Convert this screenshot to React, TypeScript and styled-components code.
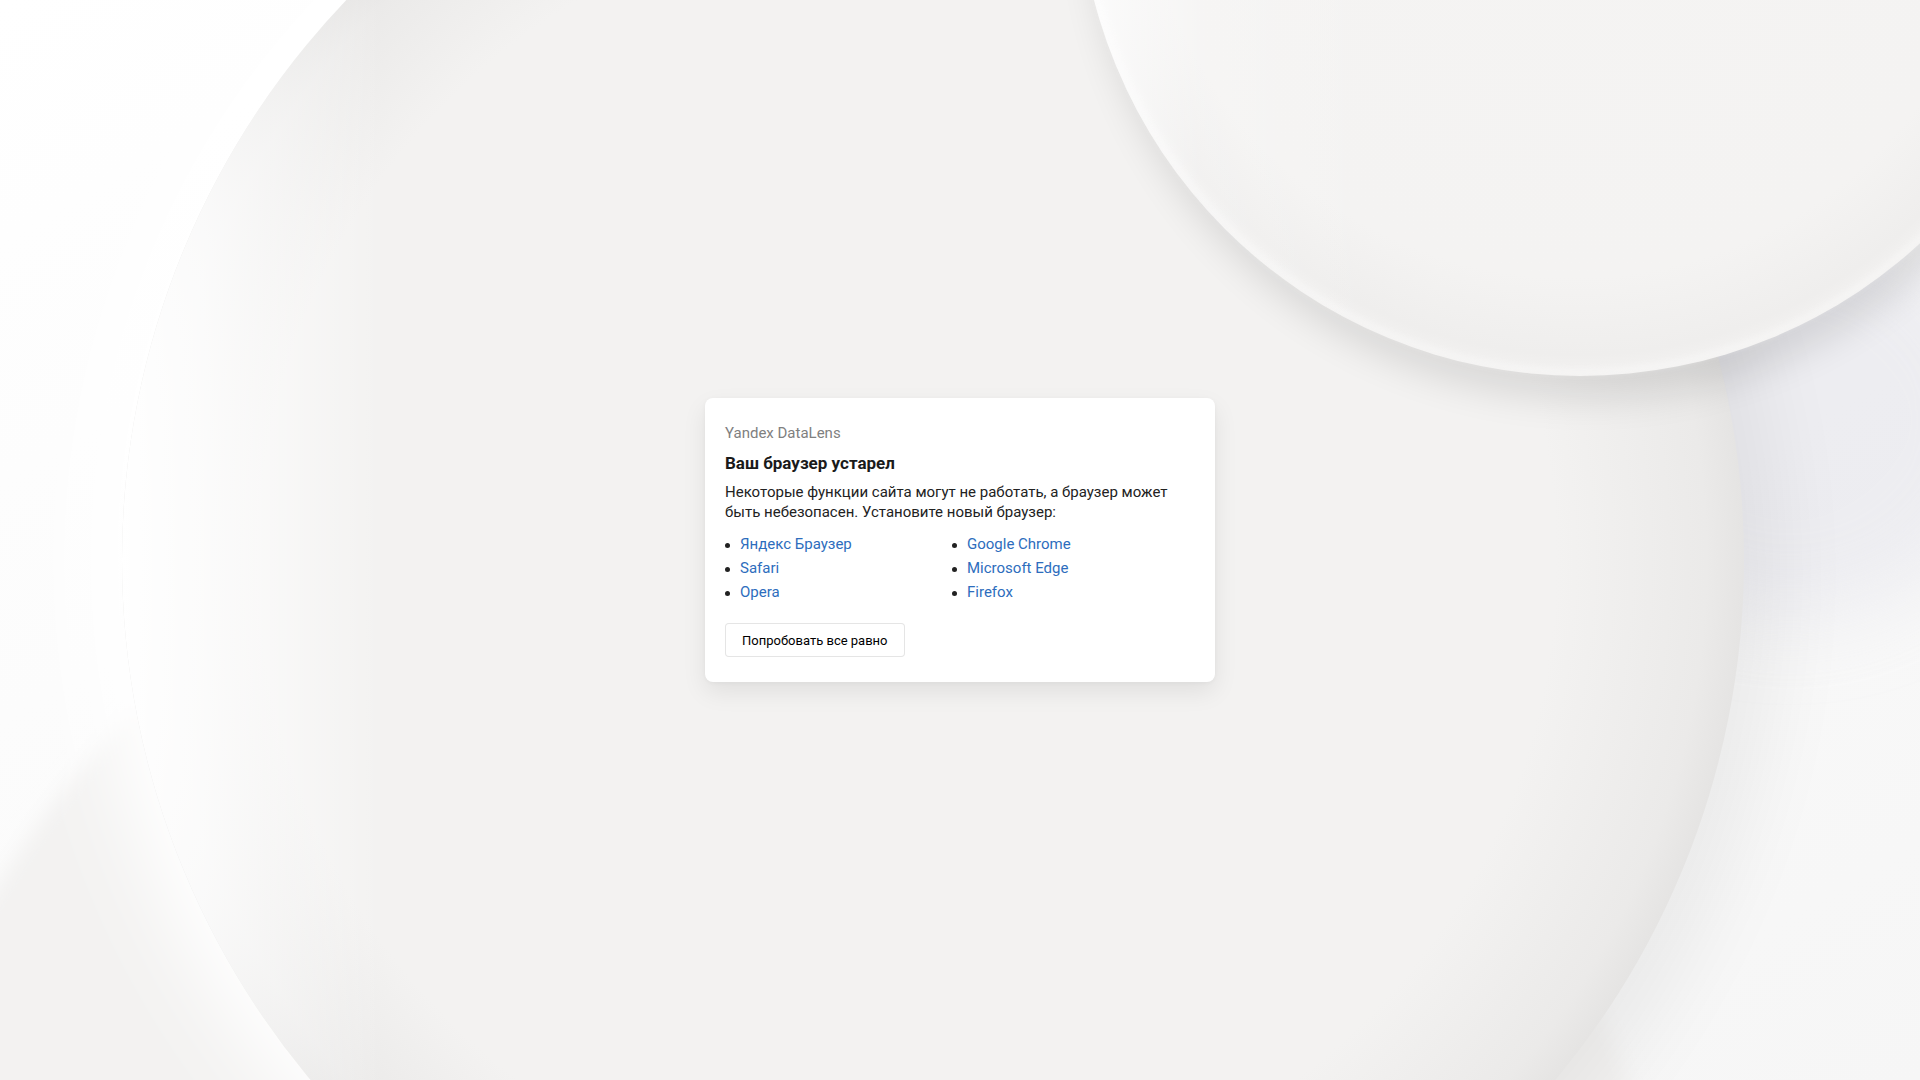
import React from 'react';
import styled, { createGlobalStyle } from 'styled-components';

const GlobalStyle = createGlobalStyle`
  html,
  body {
    margin: 0;
    height: 100%;
  }

  body {
    background: #f7f7f7;
    font-family: Roboto, 'Noto Sans', Arial, sans-serif;
    -webkit-font-smoothing: antialiased;
  }
`;

const Page = styled.main`
  align-items: center;
  display: flex;
  justify-content: center;
  min-height: 100vh;
  overflow: hidden;
  position: relative;
`;

const Canvas = styled.svg`
  height: 100%;
  inset: 0;
  position: absolute;
  width: 100%;
`;

const Card = styled.section`
  background: #fff;
  border-radius: 8px;
  box-shadow: 0 10px 24px rgba(0, 0, 0, 0.08), 0 1px 4px rgba(0, 0, 0, 0.04);
  box-sizing: border-box;
  padding: 26px 20px 25px;
  position: relative;
  width: 510px;
`;

const Brand = styled.div`
  color: #808080;
  font-size: 15px;
  line-height: 18px;
`;

const Title = styled.h1`
  color: #1a1a1a;
  font-size: 17px;
  font-weight: 700;
  line-height: 20px;
  margin: 11px 0 0;
`;

const Text = styled.p`
  color: #222;
  font-size: 15px;
  line-height: 20px;
  margin: 9px 0 0;
`;

const BrowserList = styled.ul`
  display: grid;
  grid-auto-flow: column;
  grid-template-columns: 227px 1fr;
  grid-template-rows: repeat(3, 24px);
  list-style: none;
  margin: 10px 0 0;
  padding: 0;
`;

const BrowserItem = styled.li`
  align-items: center;
  display: flex;
  font-size: 15px;
  gap: 10px;
  line-height: 24px;
`;

const Bullet = styled.span`
  background: #222;
  border-radius: 50%;
  flex: none;
  height: 5px;
  margin-top: 3px;
  width: 5px;
`;

const Link = styled.a`
  color: #2d6dbd;
  text-decoration: none;
`;

const TryButton = styled.button`
  background: #fff;
  border: 1px solid rgba(0, 0, 0, 0.1);
  border-radius: 4px;
  color: #000;
  cursor: pointer;
  display: block;
  font-family: inherit;
  font-size: 13px;
  height: 34px;
  margin-top: 19px;
  padding: 0 16px;
`;

const browsers = [
  'Яндекс Браузер',
  'Safari',
  'Opera',
  'Google Chrome',
  'Microsoft Edge',
  'Firefox',
];

const Backdrop = () => (
  <Canvas viewBox="0 0 1920 1080" preserveAspectRatio="xMidYMid slice">
    <defs>
      <linearGradient id="bg" x1="0" y1="0" x2="1" y2="1">
        <stop offset="0" stopColor="#ffffff" />
        <stop offset="1" stopColor="#f6f6f6" />
      </linearGradient>
      <filter id="blur40" x="-30%" y="-30%" width="160%" height="160%">
        <feGaussianBlur stdDeviation="40" />
      </filter>
      <filter id="blur18" x="-30%" y="-30%" width="160%" height="160%">
        <feGaussianBlur stdDeviation="18" />
      </filter>
      <filter id="blur10" x="-30%" y="-30%" width="160%" height="160%">
        <feGaussianBlur stdDeviation="10" />
      </filter>
      <filter id="blur3" x="-10%" y="-10%" width="120%" height="120%">
        <feGaussianBlur stdDeviation="3" />
      </filter>
      <linearGradient id="glowFill" x1="0" y1="0" x2="1" y2="0">
        <stop offset="0" stopColor="#fff" stopOpacity="1" />
        <stop offset="0.4" stopColor="#fff" stopOpacity="1" />
        <stop offset="0.6" stopColor="#fff" stopOpacity="0" />
      </linearGradient>
      <linearGradient id="shadeFill" x1="0" y1="0" x2="1" y2="0">
        <stop offset="0.45" stopColor="#000" stopOpacity="0" />
        <stop offset="0.8" stopColor="#000" stopOpacity="1" />
      </linearGradient>
      <radialGradient id="bigFill" cx="0.5" cy="0.5" r="0.5" fx="0.42" fy="0.5">
        <stop offset="0" stopColor="#f3f2f1" />
        <stop offset="0.8" stopColor="#f3f2f1" />
        <stop offset="0.96" stopColor="#ebeae9" />
        <stop offset="1" stopColor="#e5e4e3" />
      </radialGradient>
      <linearGradient id="bigLight" x1="0" y1="0" x2="1" y2="0">
        <stop offset="0" stopColor="#fff" stopOpacity="1" />
        <stop offset="0.05" stopColor="#fff" stopOpacity="0.8" />
        <stop offset="0.16" stopColor="#fff" stopOpacity="0" />
      </linearGradient>
      <radialGradient id="topFill" cx="0.5" cy="0.5" r="0.5" fx="0.45" fy="0.3">
        <stop offset="0" stopColor="#f5f4f3" />
        <stop offset="0.86" stopColor="#f4f3f2" />
        <stop offset="0.97" stopColor="#efeeed" />
        <stop offset="1" stopColor="#f3f2f1" />
      </radialGradient>
      <linearGradient id="topLight" x1="0" y1="0" x2="1" y2="0">
        <stop offset="0" stopColor="#fff" stopOpacity="0.9" />
        <stop offset="0.12" stopColor="#fff" stopOpacity="0.2" />
        <stop offset="0.3" stopColor="#fff" stopOpacity="0" />
      </linearGradient>
    </defs>
    <rect width="1920" height="1080" fill="url(#bg)" />
    <ellipse cx="1790" cy="420" rx="220" ry="200" fill="#e8e8ee" opacity="0.7" filter="url(#blur40)" />
    <circle cx="768" cy="1351" r="900" fill="#f3f2f1" filter="url(#blur10)" />
    <circle cx="905" cy="560" r="815" fill="url(#glowFill)" filter="url(#blur40)" />
    <circle cx="970" cy="575" r="811" fill="url(#shadeFill)" opacity="0.05" filter="url(#blur40)" />
    <circle cx="933" cy="560" r="811" fill="url(#bigFill)" />
    <circle cx="933" cy="560" r="811" fill="url(#bigLight)" />
    <circle cx="1588" cy="-100" r="500" fill="#000" opacity="0.1" filter="url(#blur18)" />
    <circle cx="1580" cy="-126" r="502" fill="url(#topFill)" />
    <circle cx="1580" cy="-126" r="502" fill="url(#topLight)" />
    <circle
      cx="1580"
      cy="-126"
      r="498"
      fill="none"
      stroke="#fff"
      strokeWidth="4"
      opacity="0.45"
      filter="url(#blur3)"
    />
  </Canvas>
);

const App: React.FC = () => (
  <>
    <GlobalStyle />
    <Page>
      <Backdrop />
      <Card>
        <Brand>Yandex DataLens</Brand>
        <Title>Ваш браузер устарел</Title>
        <Text>
          Некоторые функции сайта могут не работать, а браузер может быть
          небезопасен. Установите новый браузер:
        </Text>
        <BrowserList>
          {browsers.map((name) => (
            <BrowserItem key={name}>
              <Bullet />
              <Link href="#">{name}</Link>
            </BrowserItem>
          ))}
        </BrowserList>
        <TryButton type="button">Попробовать все равно</TryButton>
      </Card>
    </Page>
  </>
);

export default App;
